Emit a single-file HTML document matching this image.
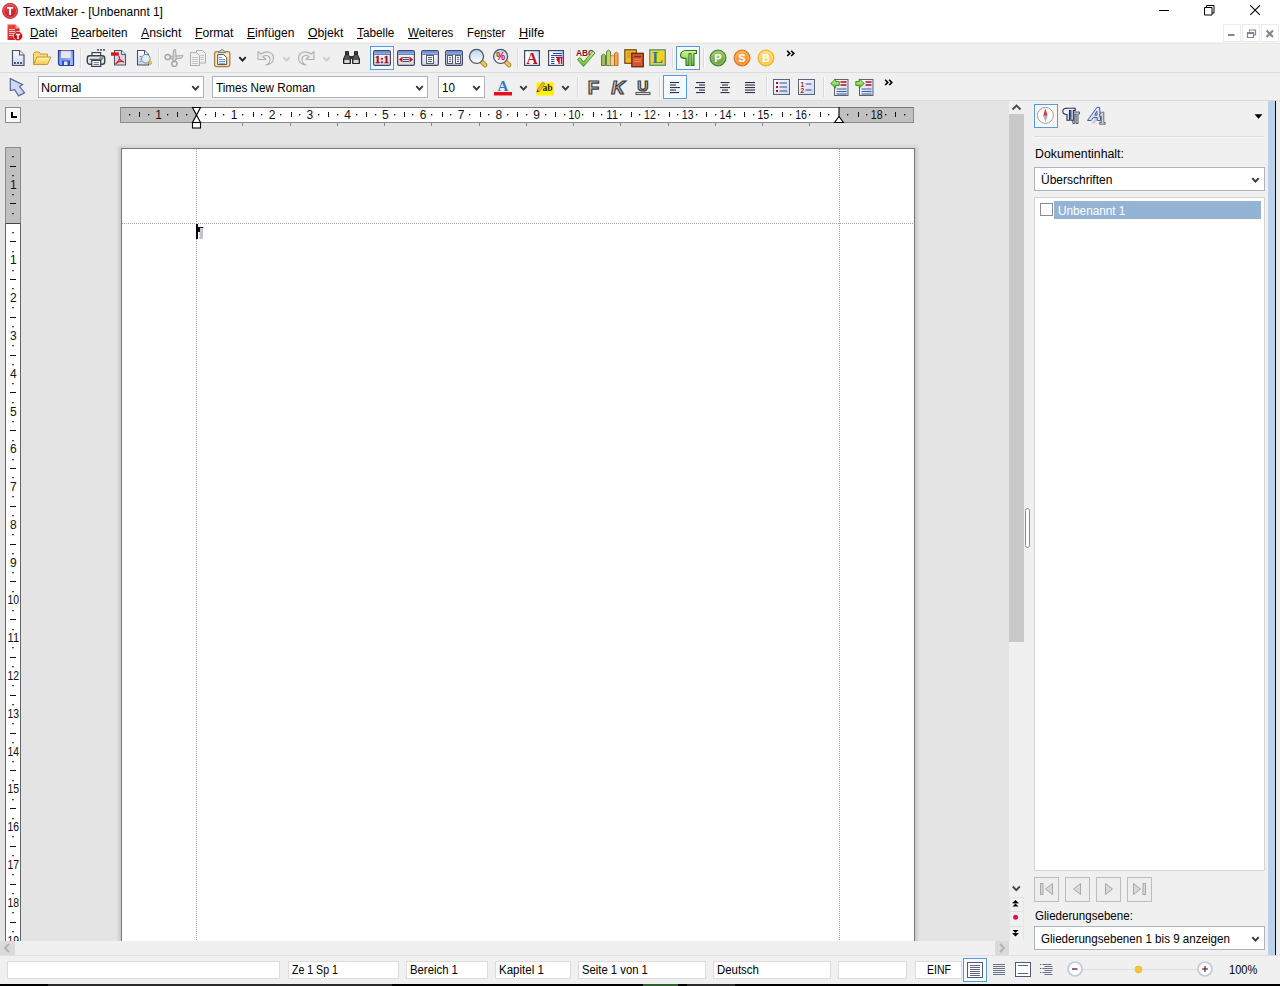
<!DOCTYPE html>
<html lang="de"><head><meta charset="utf-8"><title>TextMaker - [Unbenannt 1]</title>
<style>
html,body{margin:0;padding:0;}
body{width:1280px;height:986px;overflow:hidden;background:#f0f0f0;position:relative;font-family:"Liberation Sans",sans-serif;}
#root{position:absolute;left:0;top:0;width:1280px;height:986px;overflow:hidden;}
#root div,#root span,#root svg{position:absolute;box-sizing:border-box;}
.t{white-space:nowrap;line-height:1;}
u{text-decoration:underline;text-underline-offset:1px;}
</style></head>
<body><div id="root">
<div style="left:0px;top:0px;width:1280px;height:43px;background:#fff;"></div>
<div style="left:0px;top:41px;width:1280px;height:3px;background:linear-gradient(#fff,#f4f4f4 50%,#e2e2e2);"></div>
<svg style="left:2px;top:3px;" width="17" height="17" viewBox="0 0 17 17"><defs><radialGradient id="tg" cx="40%" cy="30%" r="75%"><stop offset="0" stop-color="#e84048"/><stop offset="1" stop-color="#c01820"/></radialGradient></defs>
<circle cx="8.1" cy="7.9" r="7.6" fill="url(#tg)" stroke="#c42830" stroke-width="0.8"/>
<circle cx="8.1" cy="7.9" r="6.4" fill="none" stroke="#f8a0a0" stroke-width="0.7" opacity=".8"/>
<path d="M5 4h6.100v1.700h-2.100v6.200h-2v-6.200h-2z" fill="#fff"/></svg>
<span class="t" id="t1" style="left:23px;top:6px;font-size:12px;color:#000;transform:scaleX(0.9893);transform-origin:0 0;">TextMaker - [Unbenannt 1]</span>
<svg style="left:1150px;top:0px;" width="130" height="22" viewBox="0 0 130 22"><g fill="none" stroke="#000" stroke-width="1">
<path d="M9 10.5h10"/>
<path d="M54.5 7.5h7.5v7.5h-7.5z"/><path d="M56.5 7.5v-2h7.5v7.5h-2"/>
<path d="M100.3 5.3l9.6 9.6M109.9 5.3l-9.6 9.6" stroke-width="1.1"/></g></svg>
<svg style="left:6px;top:23px;" width="18" height="19" viewBox="0 0 18 19"><defs><linearGradient id="mg" x1="0" y1="0" x2="1" y2="1"><stop offset="0" stop-color="#f0524c"/><stop offset="1" stop-color="#c0141c"/></linearGradient></defs>
<path d="M1.500 1.500h8l4 4v11.500h-12z" fill="url(#mg)"/>
<path d="M9.500 1.500v4h4z" fill="#f7a9a4"/>
<path d="M3 6.500h6M3 8.500h6M3 10.500h5M3 12.500h4" stroke="#f9c7c3" stroke-width="1"/>
<circle cx="12" cy="13" r="4.600" fill="#c4151d" stroke="#fbd2cf" stroke-width="0.8"/>
<path d="M9.800 10.800h4.400v1.400h-1.400v3.800h-1.600v-3.800H9.800z" fill="#fff"/></svg>
<span class="t" id="t2" style="left:29.5px;top:27px;font-size:12px;color:#000;transform:scaleX(0.9775);transform-origin:0 0;"><u>D</u>atei</span>
<span class="t" id="t3" style="left:70.5px;top:27px;font-size:12px;color:#000;transform:scaleX(0.9714);transform-origin:0 0;"><u>B</u>earbeiten</span>
<span class="t" id="t4" style="left:140.5px;top:27px;font-size:12px;color:#000;transform:scaleX(1.0260);transform-origin:0 0;"><u>A</u>nsicht</span>
<span class="t" id="t5" style="left:194.5px;top:27px;font-size:12px;color:#000;transform:scaleX(1.0097);transform-origin:0 0;"><u>F</u>ormat</span>
<span class="t" id="t6" style="left:246.5px;top:27px;font-size:12px;color:#000;transform:scaleX(1.0002);transform-origin:0 0;"><u>E</u>infügen</span>
<span class="t" id="t7" style="left:307.5px;top:27px;font-size:12px;color:#000;transform:scaleX(1.0201);transform-origin:0 0;"><u>O</u>bjekt</span>
<span class="t" id="t8" style="left:356.5px;top:27px;font-size:12px;color:#000;transform:scaleX(0.9834);transform-origin:0 0;"><u>T</u>abelle</span>
<span class="t" id="t9" style="left:407.5px;top:27px;font-size:12px;color:#000;transform:scaleX(0.9631);transform-origin:0 0;"><u>W</u>eiteres</span>
<span class="t" id="t10" style="left:466.5px;top:27px;font-size:12px;color:#000;transform:scaleX(0.9431);transform-origin:0 0;">Fe<u>n</u>ster</span>
<span class="t" id="t11" style="left:518.5px;top:27px;font-size:12px;color:#000;transform:scaleX(1.0576);transform-origin:0 0;"><u>H</u>ilfe</span>
<div style="left:1223px;top:24px;width:18px;height:18px;border:1px solid #ececec;background:#fff;"></div>
<div style="left:1242px;top:24px;width:18px;height:18px;border:1px solid #ececec;background:#fff;"></div>
<div style="left:1261px;top:24px;width:18px;height:18px;border:1px solid #ececec;background:#fff;"></div>
<svg style="left:1223px;top:24px;" width="56" height="18" viewBox="0 0 56 18"><g fill="none" stroke="#7d858f">
<path d="M5 11h6.500" stroke-width="2"/>
<path d="M24.500 8.500h6v5h-6z" stroke-width="1.2"/><path d="M24.500 9h6" stroke-width="2"/><path d="M26.500 7.500v-1.500h6v5h-2" stroke-width="1.200"/>
<path d="M43.500 6.500l6.500 6.500M50 6.500l-6.500 6.500" stroke-width="2"/></g></svg>
<div style="left:0px;top:44px;width:1280px;height:57px;background:#f0f0f0;"></div>
<div style="left:0px;top:72px;width:1280px;height:1px;background:#dcdcdc;"></div>
<div style="left:0px;top:100px;width:1280px;height:1px;background:#dadada;"></div>
<svg width="0" height="0" style="left:0;top:0"><defs>
<linearGradient id="gdoc" x1="0" y1="0" x2="0" y2="1"><stop offset="0" stop-color="#ffffff"/><stop offset="1" stop-color="#c9d3ec"/></linearGradient>
<linearGradient id="gfold" x1="0" y1="0" x2="0" y2="1"><stop offset="0" stop-color="#fff3b8"/><stop offset="1" stop-color="#f2c84a"/></linearGradient>
<linearGradient id="gsave" x1="0" y1="0" x2="1" y2="1"><stop offset="0" stop-color="#5c86ea"/><stop offset="1" stop-color="#a8c4ff"/></linearGradient>
<linearGradient id="gwin" x1="0" y1="0" x2="0" y2="1"><stop offset="0" stop-color="#ffffff"/><stop offset="1" stop-color="#d5d9e4"/></linearGradient>
<linearGradient id="gtitle" x1="0" y1="0" x2="0" y2="1"><stop offset="0" stop-color="#4f78d8"/><stop offset="1" stop-color="#9cb4ec"/></linearGradient>
<radialGradient id="glens" cx="40%" cy="35%" r="70%"><stop offset="0" stop-color="#ffffff"/><stop offset="1" stop-color="#cfe0f2"/></radialGradient>
<radialGradient id="gP" cx="50%" cy="35%" r="70%"><stop offset="0" stop-color="#a6d06a"/><stop offset="1" stop-color="#4c8a2a"/></radialGradient>
<radialGradient id="gS" cx="50%" cy="35%" r="70%"><stop offset="0" stop-color="#ffb648"/><stop offset="1" stop-color="#e8721a"/></radialGradient>
<radialGradient id="gB" cx="50%" cy="35%" r="70%"><stop offset="0" stop-color="#ffe58a"/><stop offset="1" stop-color="#f5b81c"/></radialGradient>
<linearGradient id="ggreen" x1="0" y1="0" x2="0" y2="1"><stop offset="0" stop-color="#d6f6a0"/><stop offset="1" stop-color="#62b82c"/></linearGradient>
<linearGradient id="glens2" x1="0" y1="0" x2="0" y2="1"><stop offset="0" stop-color="#bcd4ec"/><stop offset="1" stop-color="#ffffff"/></linearGradient>
<linearGradient id="gfku" x1="0" y1="0" x2="1" y2="1"><stop offset="0" stop-color="#fafafa"/><stop offset="1" stop-color="#8e8e8e"/></linearGradient>
<linearGradient id="glistr" x1="0" y1="1" x2="1" y2="0"><stop offset="0.500" stop-color="#ffffff"/><stop offset="1" stop-color="#c4d4f0"/></linearGradient>
<linearGradient id="glist" x1="0" y1="0" x2="1" y2="1"><stop offset="0" stop-color="#ffffff"/><stop offset="1" stop-color="#c6d4f0"/></linearGradient>
</defs></svg>
<svg style="left:11px;top:49px;" width="15" height="18" viewBox="0 0 15 18"><path d="M1.500 1.500h7l4.500 4.500v10.500h-11.500z" fill="url(#gdoc)" stroke="#4a5068" stroke-width="1.200"/><path d="M8.500 1.500v4.500h4.500" fill="#f4f6fc" stroke="#4a5068" stroke-width="1.100"/>
<rect x="3" y="13" width="2" height="2" fill="#4a5a80"/><rect x="6" y="13" width="2" height="2" fill="#4a5a80"/><rect x="9" y="13" width="2" height="2" fill="#4a5a80"/></svg>
<svg style="left:32px;top:50px;" width="20" height="17" viewBox="0 0 20 17"><path d="M1.500 14.500v-11l1.500-1.500h4l1.500 2h7v3" fill="#f7dc7a" stroke="#c79a2a" stroke-width="1"/>
<path d="M1.500 14.500l3.500-7.500h14l-3.500 7.500z" fill="url(#gfold)" stroke="#c79a2a" stroke-width="1"/></svg>
<svg style="left:57px;top:49px;" width="18" height="18" viewBox="0 0 18 18"><path d="M1.500 1.500h15v15h-13.500l-1.500-1.500z" fill="url(#gsave)" stroke="#2c3c94" stroke-width="1.200"/>
<rect x="4" y="2" width="10" height="7" fill="#e8e8e8"/><path d="M4 2h10v7" fill="none" stroke="#b8b8c0" stroke-width="0.8"/>
<rect x="5" y="11.500" width="8" height="5" fill="#3450b4"/><rect x="7" y="12.500" width="3.500" height="3.500" fill="#e8e8e8"/></svg>
<div style="left:80px;top:48px;width:1px;height:20px;background:#dadada;"></div>
<div style="left:81px;top:48px;width:1px;height:20px;background:#fafafa;"></div>
<svg style="left:86px;top:48px;" width="21" height="20" viewBox="0 0 21 20"><rect x="11" y="1.200" width="2" height="1.400" fill="#3a3e48"/><rect x="14" y="1.200" width="2" height="1.400" fill="#3a3e48"/><rect x="17" y="1.200" width="2" height="1.400" fill="#3a3e48"/>
<rect x="6" y="4.600" width="8.600" height="4" fill="#fff" stroke="#3a4048" stroke-width="1.200"/>
<rect x="1.300" y="7.700" width="17.400" height="8.600" rx="2.600" fill="#e6e9ec" stroke="#3a4048" stroke-width="1.400"/>
<path d="M13.500 10h4" stroke="#4c9a48" stroke-width="1.400"/><path d="M3.500 11.300h13" stroke="#4a5058" stroke-width="1"/>
<rect x="5.700" y="12.400" width="9" height="6" fill="#fff" stroke="#3a4048" stroke-width="1.200"/>
<path d="M7.500 14.700h5.500M7.500 16.500h5.500" stroke="#4a66b0" stroke-width="0.900"/></svg>
<svg style="left:110px;top:49px;" width="17" height="18" viewBox="0 0 17 18"><path d="M4.500 1.500h7l4 4v10.500h-11z" fill="#d6dae6" stroke="#505868" stroke-width="1.100"/><path d="M11.500 1.500v4h4" fill="#e4f2f8" stroke="#505868" stroke-width="1"/>
<rect x="1" y="3.400" width="7.800" height="3.300" fill="#e01020"/>
<path d="M9 7c1.300 2.800-1.200 6.200-3.500 8 2-2 5.500-3 8.500-2.200-3-0.600-5-3-5-5.800z" fill="none" stroke="#d8202c" stroke-width="1.300"/></svg>
<svg style="left:136px;top:49px;" width="18" height="18" viewBox="0 0 18 18"><path d="M1.500 1.500h7l4 4v10.500h-11z" fill="url(#gdoc)" stroke="#4a5068" stroke-width="1.100"/><path d="M8.500 1.500v4h4" fill="#f4f6fc" stroke="#4a5068" stroke-width="1"/>
<path d="M3.500 7.500h2M4 10h1.500M3.500 12.500h2" stroke="#7c88a8" stroke-width="1"/>
<circle cx="9.900" cy="9.700" r="4.300" fill="#dceef8" stroke="#7e8aa0" stroke-width="1"/><circle cx="14" cy="13.700" r="1.800" fill="#eab846" stroke="#c89a30" stroke-width="0.500"/></svg>
<div style="left:158px;top:48px;width:1px;height:20px;background:#dadada;"></div>
<div style="left:159px;top:48px;width:1px;height:20px;background:#fafafa;"></div>
<svg style="left:164px;top:49px;" width="20" height="18" viewBox="0 0 20 18"><g fill="#dcdcdc" stroke="#a6a6a6" stroke-width="1"><path d="M6.300 7.300l12.700-0.700-1 2.300-8 1.600-3.700-0.800z"/><path d="M9 12.300l0.400-11.300 2.100-0.500 0.700 8.500-1 3.300z"/></g>
<g fill="#f0f0f0" stroke="#a6a6a6" stroke-width="1.500"><circle cx="3.700" cy="8" r="2.600"/><circle cx="10.400" cy="14.800" r="2.600"/></g></svg>
<svg style="left:189px;top:49px;" width="18" height="18" viewBox="0 0 18 18"><g fill="#f0f0f0" stroke="#adadad" stroke-width="1"><path d="M7.500 1.500h6l3 3v9.500h-9z"/><path d="M1.500 3.500h6l3 3v10h-9z"/></g>
<path d="M3 8.500h6M3 10.500h6M3 12.500h6M3 14.500h6M11.500 6.500h3.500M11.500 8.500h3.500M11.500 10.500h3.500" stroke="#c4c4c4" stroke-width="1"/></svg>
<svg style="left:213px;top:48px;" width="18" height="20" viewBox="0 0 18 20"><rect x="1.600" y="3.600" width="15.200" height="15" rx="1.800" fill="#fce6bc" stroke="#a87c44" stroke-width="1.300"/>
<path d="M5.500 4.600c0-1.500 1.500-1.600 2-1.800 0.300-1.600 3-1.600 3.300 0 0.500 0.200 2 0.300 2 1.800z" fill="#c8ccd0" stroke="#70747c" stroke-width="0.900"/>
<path d="M4.700 6.600h6l3 3v7h-9z" fill="#fff" stroke="#4c4c50" stroke-width="1"/>
<path d="M6 9.500h3M6 11.500h6M6 13.500h6M6 15.300h6" stroke="#5a8ad0" stroke-width="0.900"/></svg>
<svg style="left:238px;top:56px;" width="9" height="7" viewBox="0 0 9 7"><path d="M1.300 1.100l3.200 3.500 3.200-3.500" fill="none" stroke="#222" stroke-width="2"/></svg>
<svg style="left:256px;top:49px;" width="20" height="18" viewBox="0 0 20 18"><path d="M2 2.500v8h8l-3-3c3-2 7-1 7 3 0 2.500-1.500 4.500-4 5.500 5-0.500 7.500-3.500 7.500-7 0-6-7-8-12.500-4z" fill="#ececec" stroke="#b0b0b0" stroke-width="1.100" stroke-linejoin="round"/></svg>
<svg style="left:282px;top:56px;" width="9" height="7" viewBox="0 0 9 7"><path d="M1.300 1.100l3.200 3.500 3.200-3.500" fill="none" stroke="#cecece" stroke-width="2"/></svg>
<svg style="left:296px;top:49px;" width="20" height="18" viewBox="0 0 20 18"><path d="M18 2.500v8h-8l3-3c-3-2-7-1-7 3 0 2.500 1.500 4.500 4 5.500-5-0.500-7.500-3.500-7.500-7 0-6 7-8 12.500-4z" fill="#ececec" stroke="#b0b0b0" stroke-width="1.100" stroke-linejoin="round"/></svg>
<svg style="left:322px;top:56px;" width="9" height="7" viewBox="0 0 9 7"><path d="M1.300 1.100l3.200 3.500 3.200-3.500" fill="none" stroke="#cecece" stroke-width="2"/></svg>
<svg style="left:342px;top:50px;" width="20" height="16" viewBox="0 0 20 16"><g fill="#555" stroke="#222" stroke-width="1"><path d="M3.500 1.500h3v3h-3zM12.500 1.500h3v3h-3z" fill="#444"/>
<path d="M1.500 13.500v-4.500l2-4.500h3l2 4.500v4.500zM10.500 13.500v-4.500l2-4.500h3l2 4.500v4.500z"/></g>
<path d="M2.500 10h5v3h-5zM11.500 10h5v3h-5z" fill="#d8d8d8"/><rect x="8" y="6" width="3" height="3" fill="#333"/></svg>
<div style="left:370px;top:46px;width:24px;height:24px;border:1px solid #5a9ad8;background:#f4f9fe;"></div>
<svg style="left:373px;top:50px;" width="20" height="17" viewBox="0 0 20 17"><rect x="0.600" y="0.600" width="16.800" height="14.800" rx="1.500" fill="url(#gwin)" stroke="#3e4766" stroke-width="1.200"/><rect x="1.200" y="1.200" width="15.600" height="2.800" fill="url(#gtitle)"/><path d="M1 4.500h16" stroke="#5a6488" stroke-width="0.800"/><text x="9" y="13" font-family="Liberation Serif,serif" font-weight="bold" font-size="11" fill="#a80808" stroke="#a80808" stroke-width="0.400" text-anchor="middle" textLength="14" lengthAdjust="spacingAndGlyphs">1:1</text></svg>
<svg style="left:397px;top:50px;" width="20" height="17" viewBox="0 0 20 17"><rect x="0.600" y="0.600" width="16.800" height="14.800" rx="1.500" fill="url(#gwin)" stroke="#3e4766" stroke-width="1.200"/><rect x="1.200" y="1.200" width="15.600" height="2.800" fill="url(#gtitle)"/><path d="M1 4.500h16" stroke="#5a6488" stroke-width="0.800"/><path d="M2 9.500l3.500-3v6zM16 9.500l-3.500-3v6z" fill="#d01010"/><path d="M6 7.500h6M6 9.500h6M6 11.500h6" stroke="#454d66" stroke-width="1"/></svg>
<svg style="left:421px;top:50px;" width="20" height="17" viewBox="0 0 20 17"><rect x="0.600" y="0.600" width="16.800" height="14.800" rx="1.500" fill="url(#gwin)" stroke="#3e4766" stroke-width="1.200"/><rect x="1.200" y="1.200" width="15.600" height="2.800" fill="url(#gtitle)"/><path d="M1 4.500h16" stroke="#5a6488" stroke-width="0.800"/><rect x="5.500" y="5.500" width="7" height="8" fill="#f4f4f4" stroke="#555d78" stroke-width="1"/><path d="M7 7.500h4M7 9.500h4M7 11.500h4" stroke="#555d78" stroke-width="1"/></svg>
<svg style="left:445px;top:50px;" width="20" height="17" viewBox="0 0 20 17"><rect x="0.600" y="0.600" width="16.800" height="14.800" rx="1.500" fill="url(#gwin)" stroke="#3e4766" stroke-width="1.200"/><rect x="1.200" y="1.200" width="15.600" height="2.800" fill="url(#gtitle)"/><path d="M1 4.500h16" stroke="#5a6488" stroke-width="0.800"/><rect x="2.500" y="5.500" width="5" height="8" fill="#f4f4f4" stroke="#555d78" stroke-width="1"/><rect x="10.500" y="5.500" width="5" height="8" fill="#f4f4f4" stroke="#555d78" stroke-width="1"/><path d="M4 7.500h2M4 9.500h2M4 11.500h2M12 7.500h2M12 9.500h2M12 11.500h2" stroke="#555d78" stroke-width="1"/></svg>
<svg style="left:468px;top:48px;" width="21" height="20" viewBox="0 0 21 20"><path d="M14 14l3 3" stroke="#b88a28" stroke-width="4.600" stroke-linecap="round"/><path d="M14 14l3 3" stroke="#ecc860" stroke-width="2.600" stroke-linecap="round"/>
<circle cx="8.500" cy="8.400" r="7" fill="url(#glens2)" stroke="#4c565e" stroke-width="1.300"/></svg>
<svg style="left:492px;top:48px;" width="21" height="20" viewBox="0 0 21 20"><path d="M14 14l3 3" stroke="#b88a28" stroke-width="4.600" stroke-linecap="round"/><path d="M14 14l3 3" stroke="#ecc860" stroke-width="2.600" stroke-linecap="round"/>
<circle cx="8.600" cy="8.400" r="7" fill="url(#glens2)" stroke="#4c565e" stroke-width="1.300"/>
<text x="8.600" y="12" font-family="Liberation Sans,sans-serif" font-weight="bold" font-size="10" fill="#d00c1c" text-anchor="middle">%</text></svg>
<div style="left:517px;top:48px;width:1px;height:20px;background:#dadada;"></div>
<div style="left:518px;top:48px;width:1px;height:20px;background:#fafafa;"></div>
<svg style="left:524px;top:50px;" width="17" height="17" viewBox="0 0 17 17"><rect x="0.600" y="0.600" width="14.800" height="14.800" fill="url(#glistr)" stroke="#3c4868" stroke-width="1.200"/>
<text x="8" y="13.600" font-family="Liberation Serif,serif" font-weight="bold" font-size="16" fill="#c01028" text-anchor="middle">A</text></svg>
<svg style="left:548px;top:50px;" width="17" height="17" viewBox="0 0 17 17"><rect x="0.600" y="0.600" width="14.800" height="14.800" fill="url(#glistr)" stroke="#3c4868" stroke-width="1.200"/>
<path d="M5 3.500h9M3 5.500h11M3 7.500h3.500M3 9.500h3.500M3 11.500h3.500M3 13.500h3.500" stroke="#2c4aa0" stroke-width="1"/>
<path d="M8 7.500h6.500M11 7.500v6.500M13.500 7.500v6.500" stroke="#c01028" stroke-width="1.400" fill="none"/><path d="M10.800 7.800a1.800 1.800 0 0 0 0 3.600z" fill="#c01028" stroke="#c01028" stroke-width="1"/></svg>
<div style="left:570px;top:48px;width:1px;height:20px;background:#dadada;"></div>
<div style="left:571px;top:48px;width:1px;height:20px;background:#fafafa;"></div>
<svg style="left:575px;top:47px;" width="22" height="21" viewBox="0 0 22 21"><text x="10" y="8.500" font-family="Liberation Sans,sans-serif" font-weight="bold" font-size="8.500" fill="#8a1418" text-anchor="middle" textLength="18" lengthAdjust="spacingAndGlyphs">ABC</text>
<path d="M2.500 12.500l2.500-2 3.500 4.500 9.500-11 2 2-11.500 13.500z" fill="url(#ggreen)" stroke="#3a8a1c" stroke-width="0.900"/></svg>
<svg style="left:600px;top:49px;" width="20" height="18" viewBox="0 0 20 18"><g stroke="#5a7a24" stroke-width="0.900"><path d="M1.500 16.500v-10l2-1.500 2 1.500v10z" fill="#9cc060"/><path d="M6.500 16.500v-14l2-1.500 2 1.500v14z" fill="#b8d878"/><path d="M10.500 16.500v-9l2-1.500 2 1.500v9z" fill="#f0d090" stroke="#b08a3a"/><path d="M14.500 16.500v-12l2-1.500 1.500 1.500v12z" fill="#f0a850" stroke="#b0702a"/></g></svg>
<svg style="left:624px;top:49px;" width="21" height="19" viewBox="0 0 21 19"><rect x="0.800" y="0.800" width="11.500" height="13.500" fill="#f0b828" stroke="#6a4a10" stroke-width="1.200"/><path d="M3 4h7M3 6h7M3 8h7" stroke="#c88a18" stroke-width="1"/>
<rect x="7.800" y="4.300" width="11.500" height="13.500" fill="#d8582c" stroke="#5a2410" stroke-width="1.200"/><path d="M10 7.500h7" stroke="#8a2c14" stroke-width="1.500"/><path d="M10 10.500h7M10 12.500h7" stroke="#f09070" stroke-width="0.800"/></svg>
<svg style="left:649px;top:49px;" width="18" height="18" viewBox="0 0 18 18"><rect x="0.800" y="0.800" width="15.500" height="15.500" fill="#f6d024" stroke="#4a9a88" stroke-width="1.300"/>
<text x="8.500" y="14" font-family="Liberation Serif,serif" font-weight="bold" font-size="16" fill="#1a7ab8" text-anchor="middle">L</text></svg>
<div style="left:672px;top:48px;width:1px;height:20px;background:#dadada;"></div>
<div style="left:673px;top:48px;width:1px;height:20px;background:#fafafa;"></div>
<div style="left:676px;top:46px;width:24px;height:24px;border:1px solid #5a9ad8;background:#f4f9fe;"></div>
<svg style="left:679px;top:49px;" width="19" height="18" viewBox="0 0 19 18"><path d="M1.500 6.500c0-3 2-5 5.500-5h10.500v3h-2.500v12h-3v-12h-2v12h-3v-7c-3.500 0-5.500-0.500-5.500-3z" fill="url(#ggreen)" stroke="#2c7a14" stroke-width="1.100" stroke-linejoin="round"/></svg>
<div style="left:703px;top:48px;width:1px;height:20px;background:#dadada;"></div>
<div style="left:704px;top:48px;width:1px;height:20px;background:#fafafa;"></div>
<svg style="left:709px;top:49px;" width="18" height="18" viewBox="0 0 18 18"><circle cx="9" cy="9" r="8" fill="url(#gP)" stroke="#4a8428" stroke-width="1"/><circle cx="9" cy="9" r="6.300" fill="none" stroke="#fff" stroke-width="0.700" opacity=".55"/>
<text x="9" y="13" font-family="Liberation Sans,sans-serif" font-weight="bold" font-size="11" fill="#fff" text-anchor="middle">P</text></svg>
<svg style="left:733px;top:49px;" width="18" height="18" viewBox="0 0 18 18"><circle cx="9" cy="9" r="8" fill="url(#gS)" stroke="#e07818" stroke-width="1"/><circle cx="9" cy="9" r="6.300" fill="none" stroke="#fff" stroke-width="0.700" opacity=".55"/>
<text x="9" y="13" font-family="Liberation Sans,sans-serif" font-weight="bold" font-size="11" fill="#fff" text-anchor="middle">S</text></svg>
<svg style="left:757px;top:49px;" width="18" height="18" viewBox="0 0 18 18"><circle cx="9" cy="9" r="8" fill="url(#gB)" stroke="#f0b020" stroke-width="1"/><circle cx="9" cy="9" r="6.300" fill="none" stroke="#fff" stroke-width="0.700" opacity=".55"/>
<text x="9" y="13" font-family="Liberation Sans,sans-serif" font-weight="bold" font-size="11" fill="#fff" text-anchor="middle">B</text></svg>
<svg style="left:786px;top:50px;" width="10" height="7" viewBox="0 0 10 7"><path d="M1.200 0.800l2.600 2.600-2.600 2.600M5.200 0.800l2.600 2.600-2.600 2.600" fill="none" stroke="#000" stroke-width="1.600"/></svg>
<svg style="left:8px;top:76px;" width="18" height="22" viewBox="0 0 18 22"><path d="M2.300 2.600l12.300 6-3 2 5 6.300-6 3-4-6.300-4.300 1z" fill="#ccd8f6" stroke="#5a6c9c" stroke-width="1.200" stroke-linejoin="miter"/></svg>
<div style="left:38px;top:76px;width:166px;height:22px;background:#fff;border:1px solid #abb3c4;"></div>
<svg style="left:191px;top:85px;" width="9" height="7" viewBox="0 0 9 7"><path d="M1.300 1.100l3.200 3.500 3.200-3.500" fill="none" stroke="#3a3a3a" stroke-width="2"/></svg>
<span class="t" id="t12" style="left:41px;top:82px;font-size:12px;color:#000;transform:scaleX(1.0447);transform-origin:0 0;">Normal</span>
<div style="left:212px;top:76px;width:216px;height:22px;background:#fff;border:1px solid #abb3c4;"></div>
<svg style="left:415px;top:85px;" width="9" height="7" viewBox="0 0 9 7"><path d="M1.300 1.100l3.200 3.500 3.200-3.500" fill="none" stroke="#3a3a3a" stroke-width="2"/></svg>
<span class="t" id="t13" style="left:216px;top:82px;font-size:12px;color:#000;transform:scaleX(0.9736);transform-origin:0 0;">Times New Roman</span>
<div style="left:438px;top:76px;width:47px;height:22px;background:#fff;border:1px solid #abb3c4;"></div>
<svg style="left:472px;top:85px;" width="9" height="7" viewBox="0 0 9 7"><path d="M1.300 1.100l3.200 3.500 3.200-3.500" fill="none" stroke="#3a3a3a" stroke-width="2"/></svg>
<span class="t" id="t14" style="left:442px;top:82px;font-size:12px;color:#000;transform:scaleX(0.9656);transform-origin:0 0;">10</span>
<svg style="left:493px;top:78px;" width="20" height="19" viewBox="0 0 20 19"><text x="10" y="12.500" font-family="Liberation Serif,serif" font-weight="bold" font-size="15" fill="#3a78b8" text-anchor="middle">A</text><rect x="1" y="14" width="18" height="3.500" fill="#e81018"/></svg>
<svg style="left:519px;top:85px;" width="9" height="7" viewBox="0 0 9 7"><path d="M1.300 1.100l3.200 3.500 3.200-3.500" fill="none" stroke="#3a3a3a" stroke-width="2"/></svg>
<svg style="left:535px;top:78px;" width="20" height="19" viewBox="0 0 20 19"><rect x="1.500" y="4.500" width="17.500" height="13" fill="#fff200"/>
<text x="12.500" y="13" font-family="Liberation Serif,serif" font-weight="bold" font-size="9.500" fill="#222" text-anchor="middle">ab</text>
<path d="M2 12l5.500-8 2.500 1.500-5.500 8z" fill="#e8b050" stroke="#a87820" stroke-width="0.600"/><path d="M2 12l2.500 1.500-3 1z" fill="#444"/></svg>
<svg style="left:561px;top:85px;" width="9" height="7" viewBox="0 0 9 7"><path d="M1.300 1.100l3.200 3.500 3.200-3.500" fill="none" stroke="#3a3a3a" stroke-width="2"/></svg>
<div style="left:577px;top:77px;width:1px;height:20px;background:#dadada;"></div>
<div style="left:578px;top:77px;width:1px;height:20px;background:#fafafa;"></div>
<svg style="left:585px;top:78px;" width="16" height="18" viewBox="0 0 16 18"><text x="8.400" y="15.500" font-family="Liberation Sans,sans-serif" font-weight="bold" font-size="18.800" fill="url(#gfku)" stroke="#3c3c3c" stroke-width="1.200" text-anchor="middle">F</text></svg>
<svg style="left:608px;top:78px;" width="21" height="18" viewBox="0 0 21 18"><text x="10" y="15.500" font-family="Liberation Sans,sans-serif" font-weight="bold" font-style="italic" font-size="18.800" fill="url(#gfku)" stroke="#3c3c3c" stroke-width="1.200" text-anchor="middle">K</text></svg>
<svg style="left:634px;top:78px;" width="18" height="19" viewBox="0 0 18 19"><text x="8.900" y="13.200" font-family="Liberation Sans,sans-serif" font-weight="bold" font-size="15.500" fill="url(#gfku)" stroke="#3c3c3c" stroke-width="1.200" text-anchor="middle">U</text><rect x="2" y="14.400" width="14" height="2.200" fill="#d8d8d8" stroke="#464646" stroke-width="0.900"/></svg>
<div style="left:659px;top:77px;width:1px;height:20px;background:#dadada;"></div>
<div style="left:660px;top:77px;width:1px;height:20px;background:#fafafa;"></div>
<div style="left:663px;top:75px;width:24px;height:24px;border:1px solid #5a9ad8;background:#f4f9fe;"></div>
<svg style="left:670px;top:82px;" width="12" height="12" viewBox="0 0 12 12"><rect x="0" y="0.0" width="9" height="1.100" fill="#2a2f4a"/><rect x="0" y="2.5" width="6" height="1.100" fill="#2a2f4a"/><rect x="0" y="5.0" width="10" height="1.100" fill="#2a2f4a"/><rect x="0" y="7.5" width="6" height="1.100" fill="#2a2f4a"/><rect x="0" y="10.0" width="9" height="1.100" fill="#2a2f4a"/></svg>
<svg style="left:695px;top:82px;" width="12" height="12" viewBox="0 0 12 12"><rect x="1" y="0.0" width="9" height="1.100" fill="#2a2f4a"/><rect x="4" y="2.5" width="6" height="1.100" fill="#2a2f4a"/><rect x="0" y="5.0" width="10" height="1.100" fill="#2a2f4a"/><rect x="4" y="7.5" width="6" height="1.100" fill="#2a2f4a"/><rect x="1" y="10.0" width="9" height="1.100" fill="#2a2f4a"/></svg>
<svg style="left:720px;top:82px;" width="12" height="12" viewBox="0 0 12 12"><rect x="0.5" y="0.0" width="9" height="1.100" fill="#2a2f4a"/><rect x="2" y="2.5" width="6" height="1.100" fill="#2a2f4a"/><rect x="0" y="5.0" width="10" height="1.100" fill="#2a2f4a"/><rect x="2" y="7.5" width="6" height="1.100" fill="#2a2f4a"/><rect x="0.5" y="10.0" width="9" height="1.100" fill="#2a2f4a"/></svg>
<svg style="left:745px;top:82px;" width="12" height="12" viewBox="0 0 12 12"><rect x="0" y="0.0" width="10" height="1.100" fill="#2a2f4a"/><rect x="0" y="2.5" width="10" height="1.100" fill="#2a2f4a"/><rect x="0" y="5.0" width="10" height="1.100" fill="#2a2f4a"/><rect x="0" y="7.5" width="10" height="1.100" fill="#2a2f4a"/><rect x="0" y="10.0" width="10" height="1.100" fill="#2a2f4a"/></svg>
<div style="left:766px;top:77px;width:1px;height:20px;background:#dadada;"></div>
<div style="left:767px;top:77px;width:1px;height:20px;background:#fafafa;"></div>
<svg style="left:773px;top:79px;" width="18" height="17" viewBox="0 0 18 17"><rect x="0.500" y="0.500" width="16" height="15" fill="url(#glist)" stroke="#5a6478" stroke-width="1"/>
<rect x="3" y="3" width="2" height="2" fill="#b01018"/><rect x="3" y="7" width="2" height="2" fill="#b01018"/><rect x="3" y="11" width="2" height="2" fill="#b01018"/>
<path d="M6.500 4h7.500M6.500 8h7.500M6.500 12h7.500" stroke="#3c4c88" stroke-width="1"/></svg>
<svg style="left:798px;top:79px;" width="18" height="17" viewBox="0 0 18 17"><rect x="0.500" y="0.500" width="16" height="15" fill="url(#glist)" stroke="#5a6478" stroke-width="1"/>
<text x="2.500" y="7.500" font-family="Liberation Sans,sans-serif" font-weight="bold" font-size="6.500" fill="#b01018">1</text><text x="2.500" y="13.500" font-family="Liberation Sans,sans-serif" font-weight="bold" font-size="6.500" fill="#b01018">2</text>
<path d="M7.500 5h6M7.500 11h6" stroke="#3c4c88" stroke-width="1"/></svg>
<div style="left:823px;top:77px;width:1px;height:20px;background:#dadada;"></div>
<div style="left:824px;top:77px;width:1px;height:20px;background:#fafafa;"></div>
<svg style="left:830px;top:78px;" width="19" height="19" viewBox="0 0 19 19"><rect x="4.500" y="1.500" width="13.500" height="16" fill="url(#glist)" stroke="#5a6478" stroke-width="1"/>
<path d="M10.500 4h6M10.500 7h6" stroke="#b01018" stroke-width="1.600"/><path d="M6.500 11h10M6.500 13.500h10M6.500 16h10" stroke="#3c4c88" stroke-width="1" opacity=".9"/><path d="M0.700 5.500l5-4.500v2.500h3.500v4h-3.500v2.500z" fill="url(#ggreen)" stroke="#2c8a14" stroke-width="0.900"/></svg>
<svg style="left:855px;top:78px;" width="19" height="19" viewBox="0 0 19 19"><rect x="4.500" y="1.500" width="13.500" height="16" fill="url(#glist)" stroke="#5a6478" stroke-width="1"/>
<path d="M10.500 4h6M10.500 7h6" stroke="#b01018" stroke-width="1.600"/><path d="M6.500 11h10M6.500 13.500h10M6.500 16h10" stroke="#3c4c88" stroke-width="1" opacity=".9"/><path d="M9.300 5.500l-5-4.500v2.500h-3.500v4h3.500v2.500z" fill="url(#ggreen)" stroke="#2c8a14" stroke-width="0.900"/></svg>
<svg style="left:884px;top:79px;" width="10" height="7" viewBox="0 0 10 7"><path d="M1.200 0.800l2.600 2.600-2.600 2.600M5.200 0.800l2.600 2.600-2.600 2.600" fill="none" stroke="#000" stroke-width="1.600"/></svg>
<div style="left:0px;top:101px;width:1009px;height:840px;background:#e4e4e4;"></div>
<div style="left:5px;top:107px;width:16px;height:16px;background:#f8f8f8;border:1px solid #8c8c8c;"></div>
<div style="left:11px;top:112px;width:2px;height:6px;background:#000;"></div>
<div style="left:11px;top:116px;width:6px;height:2px;background:#000;"></div>
<div style="left:120px;top:107px;width:794px;height:16px;background:#fff;border-top:1px solid #777;border-bottom:1px solid #8a8a8a;"></div>
<div style="left:120px;top:108px;width:76px;height:14px;background:#c0c0c0;"></div>
<div style="left:839px;top:108px;width:75px;height:14px;background:#c0c0c0;"></div>
<div style="left:120px;top:107px;width:1px;height:16px;background:#8a8a8a;"></div>
<div style="left:913px;top:107px;width:1px;height:16px;background:#8a8a8a;"></div>
<svg style="left:120px;top:107px;" width="794" height="16" viewBox="0 0 794 16"><g font-family="Liberation Sans,sans-serif" font-size="12" fill="#111"><rect x="9" y="7" width="1.300" height="1.400" fill="#111"/><rect x="19" y="5" width="1" height="5" fill="#111"/><rect x="28" y="7" width="1.300" height="1.400" fill="#111"/><text x="38.6" y="12.400" text-anchor="middle">1</text><rect x="47" y="7" width="1.300" height="1.400" fill="#111"/><rect x="57" y="5" width="1" height="5" fill="#111"/><rect x="66" y="7" width="1.300" height="1.400" fill="#111"/><rect x="85" y="7" width="1.300" height="1.400" fill="#111"/><rect x="95" y="5" width="1" height="5" fill="#111"/><rect x="103" y="7" width="1.300" height="1.400" fill="#111"/><text x="114.2" y="12.400" text-anchor="middle">1</text><rect x="122" y="7" width="1.300" height="1.400" fill="#111"/><rect x="133" y="5" width="1" height="5" fill="#111"/><rect x="141" y="7" width="1.300" height="1.400" fill="#111"/><text x="152.0" y="12.400" text-anchor="middle">2</text><rect x="160" y="7" width="1.300" height="1.400" fill="#111"/><rect x="171" y="5" width="1" height="5" fill="#111"/><rect x="179" y="7" width="1.300" height="1.400" fill="#111"/><text x="189.8" y="12.400" text-anchor="middle">3</text><rect x="198" y="7" width="1.300" height="1.400" fill="#111"/><rect x="208" y="5" width="1" height="5" fill="#111"/><rect x="217" y="7" width="1.300" height="1.400" fill="#111"/><text x="227.6" y="12.400" text-anchor="middle">4</text><rect x="236" y="7" width="1.300" height="1.400" fill="#111"/><rect x="246" y="5" width="1" height="5" fill="#111"/><rect x="255" y="7" width="1.300" height="1.400" fill="#111"/><text x="265.4" y="12.400" text-anchor="middle">5</text><rect x="274" y="7" width="1.300" height="1.400" fill="#111"/><rect x="284" y="5" width="1" height="5" fill="#111"/><rect x="292" y="7" width="1.300" height="1.400" fill="#111"/><text x="303.2" y="12.400" text-anchor="middle">6</text><rect x="311" y="7" width="1.300" height="1.400" fill="#111"/><rect x="322" y="5" width="1" height="5" fill="#111"/><rect x="330" y="7" width="1.300" height="1.400" fill="#111"/><text x="341.0" y="12.400" text-anchor="middle">7</text><rect x="349" y="7" width="1.300" height="1.400" fill="#111"/><rect x="360" y="5" width="1" height="5" fill="#111"/><rect x="368" y="7" width="1.300" height="1.400" fill="#111"/><text x="378.8" y="12.400" text-anchor="middle">8</text><rect x="387" y="7" width="1.300" height="1.400" fill="#111"/><rect x="397" y="5" width="1" height="5" fill="#111"/><rect x="406" y="7" width="1.300" height="1.400" fill="#111"/><text x="416.6" y="12.400" text-anchor="middle">9</text><rect x="425" y="7" width="1.300" height="1.400" fill="#111"/><rect x="435" y="5" width="1" height="5" fill="#111"/><rect x="444" y="7" width="1.300" height="1.400" fill="#111"/><text x="454.4" y="12.400" text-anchor="middle" textLength="11.8" lengthAdjust="spacingAndGlyphs">10</text><rect x="462" y="7" width="1.300" height="1.400" fill="#111"/><rect x="473" y="5" width="1" height="5" fill="#111"/><rect x="481" y="7" width="1.300" height="1.400" fill="#111"/><text x="492.1" y="12.400" text-anchor="middle" textLength="11.8" lengthAdjust="spacingAndGlyphs">11</text><rect x="500" y="7" width="1.300" height="1.400" fill="#111"/><rect x="511" y="5" width="1" height="5" fill="#111"/><rect x="519" y="7" width="1.300" height="1.400" fill="#111"/><text x="529.9" y="12.400" text-anchor="middle" textLength="11.8" lengthAdjust="spacingAndGlyphs">12</text><rect x="538" y="7" width="1.300" height="1.400" fill="#111"/><rect x="549" y="5" width="1" height="5" fill="#111"/><rect x="557" y="7" width="1.300" height="1.400" fill="#111"/><text x="567.7" y="12.400" text-anchor="middle" textLength="11.8" lengthAdjust="spacingAndGlyphs">13</text><rect x="576" y="7" width="1.300" height="1.400" fill="#111"/><rect x="586" y="5" width="1" height="5" fill="#111"/><rect x="595" y="7" width="1.300" height="1.400" fill="#111"/><text x="605.5" y="12.400" text-anchor="middle" textLength="11.8" lengthAdjust="spacingAndGlyphs">14</text><rect x="614" y="7" width="1.300" height="1.400" fill="#111"/><rect x="624" y="5" width="1" height="5" fill="#111"/><rect x="633" y="7" width="1.300" height="1.400" fill="#111"/><text x="643.3" y="12.400" text-anchor="middle" textLength="11.8" lengthAdjust="spacingAndGlyphs">15</text><rect x="651" y="7" width="1.300" height="1.400" fill="#111"/><rect x="662" y="5" width="1" height="5" fill="#111"/><rect x="670" y="7" width="1.300" height="1.400" fill="#111"/><text x="681.1" y="12.400" text-anchor="middle" textLength="11.8" lengthAdjust="spacingAndGlyphs">16</text><rect x="689" y="7" width="1.300" height="1.400" fill="#111"/><rect x="700" y="5" width="1" height="5" fill="#111"/><rect x="708" y="7" width="1.300" height="1.400" fill="#111"/><rect x="727" y="7" width="1.300" height="1.400" fill="#111"/><rect x="738" y="5" width="1" height="5" fill="#111"/><rect x="746" y="7" width="1.300" height="1.400" fill="#111"/><text x="756.7" y="12.400" text-anchor="middle" textLength="11.8" lengthAdjust="spacingAndGlyphs">18</text><rect x="765" y="7" width="1.300" height="1.400" fill="#111"/><rect x="775" y="5" width="1" height="5" fill="#111"/><rect x="784" y="7" width="1.300" height="1.400" fill="#111"/></g></svg>
<svg style="left:120px;top:123px;" width="794" height="4" viewBox="0 0 794 4"><rect x="122" y="0" width="1" height="3" fill="#808080"/><rect x="170" y="0" width="1" height="3" fill="#808080"/><rect x="217" y="0" width="1" height="3" fill="#808080"/><rect x="264" y="0" width="1" height="3" fill="#808080"/><rect x="311" y="0" width="1" height="3" fill="#808080"/><rect x="359" y="0" width="1" height="3" fill="#808080"/><rect x="406" y="0" width="1" height="3" fill="#808080"/><rect x="453" y="0" width="1" height="3" fill="#808080"/><rect x="500" y="0" width="1" height="3" fill="#808080"/><rect x="548" y="0" width="1" height="3" fill="#808080"/><rect x="595" y="0" width="1" height="3" fill="#808080"/><rect x="642" y="0" width="1" height="3" fill="#808080"/><rect x="689" y="0" width="1" height="3" fill="#808080"/></svg>
<svg style="left:191px;top:106px;" width="11" height="23" viewBox="0 0 11 23"><path d="M1.500 1.500h8l-4 7.500z" fill="#fff" stroke="#000" stroke-width="1.100"/><path d="M1.500 16.500h8l-4-7.500z" fill="#fff" stroke="#000" stroke-width="1.100"/><rect x="1.500" y="16.500" width="8" height="5.500" fill="#fff" stroke="#000" stroke-width="1.100"/></svg>
<svg style="left:833px;top:106px;" width="12" height="18" viewBox="0 0 12 18"><path d="M6 1v10" stroke="#000" stroke-width="1.100"/><path d="M1.600 16.500h8.800l-4.400-6z" fill="#fff" stroke="#000" stroke-width="1.100"/></svg>
<div style="left:5px;top:147px;width:16px;height:794px;background:#fff;border-left:1px solid #666;border-right:1px solid #666;"></div>
<div style="left:5px;top:147px;width:16px;height:77px;background:#c0c0c0;border:1px solid #8a8a8a;border-bottom:1px solid #444;"></div>
<svg style="left:5px;top:147px;" width="16" height="794" viewBox="0 0 16 794"><g font-family="Liberation Sans,sans-serif" font-size="12" fill="#111"><rect x="7.200" y="9.0" width="1.500" height="1.300" fill="#111"/><rect x="5" y="19.0" width="6" height="1" fill="#111"/><rect x="7.200" y="28.0" width="1.500" height="1.300" fill="#111"/><text x="8.300" y="41.7" text-anchor="middle">1</text><rect x="7.200" y="47.0" width="1.500" height="1.300" fill="#111"/><rect x="5" y="56.0" width="6" height="1" fill="#111"/><rect x="7.200" y="66.0" width="1.500" height="1.300" fill="#111"/><rect x="7.200" y="85.0" width="1.500" height="1.300" fill="#111"/><rect x="5" y="94.0" width="6" height="1" fill="#111"/><rect x="7.200" y="104.0" width="1.500" height="1.300" fill="#111"/><text x="8.300" y="117.3" text-anchor="middle">1</text><rect x="7.200" y="123.0" width="1.500" height="1.300" fill="#111"/><rect x="5" y="132.0" width="6" height="1" fill="#111"/><rect x="7.200" y="141.0" width="1.500" height="1.300" fill="#111"/><text x="8.300" y="155.1" text-anchor="middle">2</text><rect x="7.200" y="160.0" width="1.500" height="1.300" fill="#111"/><rect x="5" y="170.0" width="6" height="1" fill="#111"/><rect x="7.200" y="179.0" width="1.500" height="1.300" fill="#111"/><text x="8.300" y="192.9" text-anchor="middle">3</text><rect x="7.200" y="198.0" width="1.500" height="1.300" fill="#111"/><rect x="5" y="208.0" width="6" height="1" fill="#111"/><rect x="7.200" y="217.0" width="1.500" height="1.300" fill="#111"/><text x="8.300" y="230.7" text-anchor="middle">4</text><rect x="7.200" y="236.0" width="1.500" height="1.300" fill="#111"/><rect x="5" y="245.0" width="6" height="1" fill="#111"/><rect x="7.200" y="255.0" width="1.500" height="1.300" fill="#111"/><text x="8.300" y="268.5" text-anchor="middle">5</text><rect x="7.200" y="274.0" width="1.500" height="1.300" fill="#111"/><rect x="5" y="283.0" width="6" height="1" fill="#111"/><rect x="7.200" y="293.0" width="1.500" height="1.300" fill="#111"/><text x="8.300" y="306.3" text-anchor="middle">6</text><rect x="7.200" y="312.0" width="1.500" height="1.300" fill="#111"/><rect x="5" y="321.0" width="6" height="1" fill="#111"/><rect x="7.200" y="330.0" width="1.500" height="1.300" fill="#111"/><text x="8.300" y="344.1" text-anchor="middle">7</text><rect x="7.200" y="349.0" width="1.500" height="1.300" fill="#111"/><rect x="5" y="359.0" width="6" height="1" fill="#111"/><rect x="7.200" y="368.0" width="1.500" height="1.300" fill="#111"/><text x="8.300" y="381.9" text-anchor="middle">8</text><rect x="7.200" y="387.0" width="1.500" height="1.300" fill="#111"/><rect x="5" y="397.0" width="6" height="1" fill="#111"/><rect x="7.200" y="406.0" width="1.500" height="1.300" fill="#111"/><text x="8.300" y="419.7" text-anchor="middle">9</text><rect x="7.200" y="425.0" width="1.500" height="1.300" fill="#111"/><rect x="5" y="434.0" width="6" height="1" fill="#111"/><rect x="7.200" y="444.0" width="1.500" height="1.300" fill="#111"/><text x="8.300" y="457.4" text-anchor="middle" textLength="11.6" lengthAdjust="spacingAndGlyphs">10</text><rect x="7.200" y="463.0" width="1.500" height="1.300" fill="#111"/><rect x="5" y="472.0" width="6" height="1" fill="#111"/><rect x="7.200" y="482.0" width="1.500" height="1.300" fill="#111"/><text x="8.300" y="495.2" text-anchor="middle" textLength="11.6" lengthAdjust="spacingAndGlyphs">11</text><rect x="7.200" y="500.0" width="1.500" height="1.300" fill="#111"/><rect x="5" y="510.0" width="6" height="1" fill="#111"/><rect x="7.200" y="519.0" width="1.500" height="1.300" fill="#111"/><text x="8.300" y="533.0" text-anchor="middle" textLength="11.6" lengthAdjust="spacingAndGlyphs">12</text><rect x="7.200" y="538.0" width="1.500" height="1.300" fill="#111"/><rect x="5" y="548.0" width="6" height="1" fill="#111"/><rect x="7.200" y="557.0" width="1.500" height="1.300" fill="#111"/><text x="8.300" y="570.8" text-anchor="middle" textLength="11.6" lengthAdjust="spacingAndGlyphs">13</text><rect x="7.200" y="576.0" width="1.500" height="1.300" fill="#111"/><rect x="5" y="586.0" width="6" height="1" fill="#111"/><rect x="7.200" y="595.0" width="1.500" height="1.300" fill="#111"/><text x="8.300" y="608.6" text-anchor="middle" textLength="11.6" lengthAdjust="spacingAndGlyphs">14</text><rect x="7.200" y="614.0" width="1.500" height="1.300" fill="#111"/><rect x="5" y="623.0" width="6" height="1" fill="#111"/><rect x="7.200" y="633.0" width="1.500" height="1.300" fill="#111"/><text x="8.300" y="646.4" text-anchor="middle" textLength="11.6" lengthAdjust="spacingAndGlyphs">15</text><rect x="7.200" y="652.0" width="1.500" height="1.300" fill="#111"/><rect x="5" y="661.0" width="6" height="1" fill="#111"/><rect x="7.200" y="671.0" width="1.500" height="1.300" fill="#111"/><text x="8.300" y="684.2" text-anchor="middle" textLength="11.6" lengthAdjust="spacingAndGlyphs">16</text><rect x="7.200" y="689.0" width="1.500" height="1.300" fill="#111"/><rect x="5" y="699.0" width="6" height="1" fill="#111"/><rect x="7.200" y="708.0" width="1.500" height="1.300" fill="#111"/><text x="8.300" y="722.0" text-anchor="middle" textLength="11.6" lengthAdjust="spacingAndGlyphs">17</text><rect x="7.200" y="727.0" width="1.500" height="1.300" fill="#111"/><rect x="5" y="737.0" width="6" height="1" fill="#111"/><rect x="7.200" y="746.0" width="1.500" height="1.300" fill="#111"/><text x="8.300" y="759.8" text-anchor="middle" textLength="11.6" lengthAdjust="spacingAndGlyphs">18</text><rect x="7.200" y="765.0" width="1.500" height="1.300" fill="#111"/><rect x="5" y="775.0" width="6" height="1" fill="#111"/><rect x="7.200" y="784.0" width="1.500" height="1.300" fill="#111"/><text x="8.300" y="797.6" text-anchor="middle" textLength="11.6" lengthAdjust="spacingAndGlyphs">19</text></g></svg>
<div style="left:116px;top:148px;width:5px;height:793px;background:linear-gradient(to right,#e4e4e4,#c9c9c9);"></div>
<div style="left:915px;top:148px;width:5px;height:793px;background:linear-gradient(to left,#e4e4e4,#c9c9c9);"></div>
<div style="left:121px;top:143px;width:794px;height:5px;background:linear-gradient(to bottom,#e4e4e4,#d3d3d3);"></div>
<div style="left:116px;top:143px;width:5px;height:5px;background:radial-gradient(circle at 100% 100%,#d3d3d3,#e4e4e4 70%);"></div>
<div style="left:915px;top:143px;width:5px;height:5px;background:radial-gradient(circle at 0% 100%,#d3d3d3,#e4e4e4 70%);"></div>
<div style="left:121px;top:148px;width:794px;height:793px;background:#fff;border:1px solid #787878;border-bottom:none;"></div>
<div style="left:196px;top:149px;width:1px;height:792px;background:repeating-linear-gradient(to bottom,#a2a2a2 0 1px,transparent 1px 2px);"></div>
<div style="left:839px;top:149px;width:1px;height:792px;background:repeating-linear-gradient(to bottom,#a2a2a2 0 1px,transparent 1px 2px);"></div>
<div style="left:122px;top:223px;width:792px;height:1px;background:repeating-linear-gradient(to right,#a2a2a2 0 1px,transparent 1px 2px);"></div>
<div style="left:196px;top:224px;width:2px;height:15px;background:#000;"></div>
<svg style="left:197px;top:225px;" width="8" height="14" viewBox="0 0 8 14"><rect x="2.500" y="4" width="3.500" height="10" fill="#c0c4d0"/><rect x="1" y="2" width="5.300" height="1.200" fill="#111"/><rect x="1" y="2" width="2" height="5" fill="#111"/></svg>
<div style="left:1009px;top:101px;width:15px;height:840px;background:#f0f0f0;"></div>
<div style="left:1009px;top:114px;width:15px;height:528px;background:#c9c9c9;"></div>
<svg style="left:1011px;top:103px;" width="11" height="8" viewBox="0 0 11 8"><path d="M1.500 6.500l4-4 4 4" fill="none" stroke="#444" stroke-width="1.800"/></svg>
<svg style="left:1011px;top:885px;" width="11" height="8" viewBox="0 0 11 8"><path d="M1.800 1.500l3.500 3.600 3.500-3.600" fill="none" stroke="#444" stroke-width="1.800"/></svg>
<div style="left:1009px;top:897px;width:15px;height:1px;background:#e0e0e0;"></div>
<div style="left:1009px;top:911px;width:15px;height:1px;background:#e0e0e0;"></div>
<div style="left:1009px;top:926px;width:15px;height:1px;background:#e0e0e0;"></div>
<div style="left:1009px;top:897px;width:1px;height:44px;background:#e6e6e6;"></div>
<div style="left:1023px;top:897px;width:1px;height:44px;background:#e6e6e6;"></div>
<svg style="left:1011px;top:899px;" width="11" height="9" viewBox="0 0 11 9"><path d="M1.500 4l3-3 3 3zM1.500 7.500l3-3 3 3z" fill="#000"/><path d="M1.500 4h6" stroke="#000" stroke-width="0.800"/></svg>
<svg style="left:1011px;top:913px;" width="11" height="9" viewBox="0 0 11 9"><circle cx="4.600" cy="4.200" r="2.500" fill="#d4145a"/></svg>
<svg style="left:1011px;top:929px;" width="11" height="9" viewBox="0 0 11 9"><path d="M1.500 1l3 3 3-3zM1.500 4.500l3 3 3-3z" fill="#000"/><path d="M1.500 4.500h6" stroke="#000" stroke-width="0.800"/></svg>
<div style="left:0px;top:941px;width:1024px;height:15px;background:#f0f0f0;"></div>
<div style="left:0px;top:941px;width:15px;height:14px;background:#dadada;"></div>
<div style="left:995px;top:941px;width:14px;height:14px;background:#dadada;"></div>
<svg style="left:3px;top:943px;" width="8" height="10" viewBox="0 0 8 10"><path d="M6 1l-4 4 4 4" fill="none" stroke="#b0b0b0" stroke-width="1.800"/></svg>
<svg style="left:998px;top:943px;" width="8" height="10" viewBox="0 0 8 10"><path d="M2 1l4 4-4 4" fill="none" stroke="#b0b0b0" stroke-width="1.800"/></svg>
<div style="left:1024px;top:101px;width:6px;height:855px;background:#f0f0f0;"></div>
<div style="left:1025px;top:508px;width:5px;height:40px;background:#fff;border:1px solid #8a8a8a;border-radius:3px;"></div>
<div style="left:1030px;top:101px;width:238px;height:855px;background:#f0f0f0;"></div>
<div style="left:1268px;top:101px;width:7px;height:855px;background:#bcd1ec;"></div>
<div style="left:1275px;top:101px;width:1px;height:855px;background:#0a0a0a;"></div>
<div style="left:1276px;top:101px;width:4px;height:855px;background:#ebebeb;"></div>
<div style="left:1034px;top:104px;width:24px;height:24px;border:1px solid #5a9ad8;background:#f4f9fe;"></div>
<svg style="left:1037px;top:107px;" width="18" height="18" viewBox="0 0 18 18"><circle cx="8.400" cy="8.400" r="8" fill="#fdfdfd" stroke="#b08878" stroke-width="0.900"/><path d="M8.400 1.500l2.200 7.300h-4.400z" fill="#e03038"/><path d="M8.400 15.300l2.200-6.500h-4.400z" fill="#a4b4c8"/></svg>
<svg style="left:1062px;top:107px;" width="20" height="19" viewBox="0 0 20 19"><path d="M8 7.500c0-1.500 1-2.500 3-2.500h6.500v2h-1.500v9.500h-2v-9.500h-1.200v9.500h-2v-6c-1.800 0-2.800-1-2.800-3z" fill="#c6cace" stroke="#5c6068" stroke-width="1"/>
<path d="M0.800 4.500c0-2.300 1.500-3.300 3.700-3.300h8.700v2.300h-1.900v9.700h-2.400v-9.700h-1.500v9.700h-2.400v-5.700c-2.600 0-4.200-0.900-4.200-3z" fill="#f4f7fc" stroke="#1c2c5c" stroke-width="1.100"/></svg>
<svg style="left:1086px;top:106px;" width="22" height="21" viewBox="0 0 22 21"><path d="M5.500 17.500l8-12h2.500l1 12h-3l-0.200-2.500h-3.500l-1.500 2.500z" fill="#c4c8cc" opacity=".9"/>
<path d="M1.500 14.500l9.500-13.200h2.600l1 13.200h-3.200l-0.200-3h-4l-1.900 3zM8.600 9.200h2.500l-0.300-4z" fill="#dfe6fa" stroke="#4058b0" stroke-width="1" fill-rule="evenodd"/>
<path d="M13.800 8l2.600-1.800h1.400v10.300h1.400v1.700h-5.600v-1.700h1.700v-6.300l-1.500 0.800z" fill="#d4d6da" stroke="#5a5e6a" stroke-width="0.900"/></svg>
<svg style="left:1254px;top:114px;" width="9" height="5" viewBox="0 0 9 5"><path d="M0.500 0.300h8l-4 4.400z" fill="#000"/></svg>
<div style="left:1034px;top:136px;width:230px;height:1px;background:#dcdcdc;"></div>
<div style="left:1034px;top:137px;width:230px;height:1px;background:#f8f8f8;"></div>
<span class="t" id="t15" style="left:1035px;top:148px;font-size:12px;color:#000;transform:scaleX(1.0252);transform-origin:0 0;">Dokumentinhalt:</span>
<div style="left:1034px;top:167px;width:231px;height:24px;background:#fff;border:1px solid #abb3c4;"></div>
<span class="t" id="t16" style="left:1041px;top:174px;font-size:12px;color:#000;transform:scaleX(1.0004);transform-origin:0 0;">Überschriften</span>
<svg style="left:1251px;top:177px;" width="9" height="7" viewBox="0 0 9 7"><path d="M1.300 1.100l3.200 3.500 3.200-3.500" fill="none" stroke="#3a3a3a" stroke-width="2"/></svg>
<div style="left:1034px;top:197px;width:231px;height:674px;background:#fff;border:1px solid #d4d4d4;"></div>
<div style="left:1040px;top:203px;width:13px;height:13px;background:#fff;border:1px solid #8c8c8c;"></div>
<div style="left:1054px;top:201px;width:207px;height:18px;background:#95b3d5;"></div>
<span class="t" id="t17" style="left:1058px;top:205px;font-size:12px;color:#fff;transform:scaleX(0.9806);transform-origin:0 0;">Unbenannt 1</span>
<div style="left:1034px;top:877px;width:25px;height:25px;background:#eeeeee;border:1px solid #bdbdbd;"></div>
<svg style="left:1034px;top:877px;" width="25" height="25" viewBox="0 0 25 25"><g fill="#d8d8d8" stroke="#a8a8a8" stroke-width="1"><rect x="6.500" y="6.500" width="2.500" height="11"/><path d="M18.500 6.500v11l-7-5.500z"/></g></svg>
<div style="left:1065px;top:877px;width:25px;height:25px;background:#eeeeee;border:1px solid #bdbdbd;"></div>
<svg style="left:1065px;top:877px;" width="25" height="25" viewBox="0 0 25 25"><g fill="#d8d8d8" stroke="#a8a8a8" stroke-width="1"><path d="M15.500 6.500v11l-7-5.500z"/></g></svg>
<div style="left:1096px;top:877px;width:25px;height:25px;background:#eeeeee;border:1px solid #bdbdbd;"></div>
<svg style="left:1096px;top:877px;" width="25" height="25" viewBox="0 0 25 25"><g fill="#d8d8d8" stroke="#a8a8a8" stroke-width="1"><path d="M9.500 6.500v11l7-5.500z"/></g></svg>
<div style="left:1127px;top:877px;width:25px;height:25px;background:#eeeeee;border:1px solid #bdbdbd;"></div>
<svg style="left:1127px;top:877px;" width="25" height="25" viewBox="0 0 25 25"><g fill="#d8d8d8" stroke="#a8a8a8" stroke-width="1"><rect x="16" y="6.500" width="2.500" height="11"/><path d="M6.500 6.500v11l7-5.500z"/></g></svg>
<span class="t" id="t18" style="left:1035px;top:910px;font-size:12px;color:#000;transform:scaleX(0.9653);transform-origin:0 0;">Gliederungsebene:</span>
<div style="left:1034px;top:926px;width:231px;height:24px;background:#fff;border:1px solid #abb3c4;"></div>
<span class="t" id="t19" style="left:1041px;top:933px;font-size:12px;color:#000;transform:scaleX(0.9663);transform-origin:0 0;">Gliederungsebenen 1 bis 9 anzeigen</span>
<svg style="left:1251px;top:936px;" width="9" height="7" viewBox="0 0 9 7"><path d="M1.300 1.100l3.200 3.500 3.200-3.500" fill="none" stroke="#3a3a3a" stroke-width="2"/></svg>
<div style="left:0px;top:956px;width:1280px;height:28px;background:#f0f0f0;"></div>
<div style="left:0px;top:955px;width:1280px;height:1px;background:#e0e0e0;"></div>
<div style="left:7px;top:961px;width:273px;height:18px;background:#fff;border:1px solid #dcdcdc;"></div>
<div style="left:288px;top:961px;width:111px;height:18px;background:#fff;border:1px solid #dcdcdc;"></div>
<span class="t" id="t20" style="left:292px;top:964px;font-size:12px;color:#000;transform:scaleX(0.8822);transform-origin:0 0;">Ze 1 Sp 1</span>
<div style="left:406px;top:961px;width:82px;height:18px;background:#fff;border:1px solid #dcdcdc;"></div>
<span class="t" id="t21" style="left:410px;top:964px;font-size:12px;color:#000;transform:scaleX(0.9447);transform-origin:0 0;">Bereich 1</span>
<div style="left:495px;top:961px;width:76px;height:18px;background:#fff;border:1px solid #dcdcdc;"></div>
<span class="t" id="t22" style="left:499px;top:964px;font-size:12px;color:#000;transform:scaleX(0.9614);transform-origin:0 0;">Kapitel 1</span>
<div style="left:578px;top:961px;width:128px;height:18px;background:#fff;border:1px solid #dcdcdc;"></div>
<span class="t" id="t23" style="left:582px;top:964px;font-size:12px;color:#000;transform:scaleX(0.9406);transform-origin:0 0;">Seite 1 von 1</span>
<div style="left:713px;top:961px;width:118px;height:18px;background:#fff;border:1px solid #dcdcdc;"></div>
<span class="t" id="t24" style="left:717px;top:964px;font-size:12px;color:#000;transform:scaleX(0.9516);transform-origin:0 0;">Deutsch</span>
<div style="left:838px;top:961px;width:69px;height:18px;background:#fff;border:1px solid #dcdcdc;"></div>
<div style="left:915px;top:961px;width:47px;height:18px;background:#fff;border:1px solid #dcdcdc;"></div>
<span class="t" id="t25" style="left:927px;top:964px;font-size:12px;color:#000;transform:scaleX(0.8741);transform-origin:0 0;">EINF</span>
<div style="left:963px;top:958px;width:24px;height:24px;border:1px solid #5a9ad8;background:#f4f9fe;"></div>
<svg style="left:966px;top:961px;" width="18" height="18" viewBox="0 0 18 18"><rect x="1.500" y="1.500" width="15" height="15" fill="#fff" stroke="#4a5a80" stroke-width="1"/><path d="M4 4.500h10M4 6.500h10M4 8.500h10M4 10.500h10M4 12.500h10M4 14.500h10" stroke="#4a5470" stroke-width="0.900"/></svg>
<svg style="left:992px;top:963px;" width="14" height="14" viewBox="0 0 14 14"><path d="M1 1.500h12M1 3.500h12M1 5.500h12M1 7.500h12M1 9.500h12M1 11.500h12" stroke="#5a6478" stroke-width="0.900"/></svg>
<svg style="left:1015px;top:961px;" width="17" height="18" viewBox="0 0 17 18"><rect x="0.500" y="1.500" width="15" height="14" fill="#fff" stroke="#4a5a80" stroke-width="1"/><path d="M3 4.500h10M3 12.500h10" stroke="#5a6480" stroke-width="1"/></svg>
<svg style="left:1039px;top:963px;" width="15" height="14" viewBox="0 0 15 14"><path d="M3.500 1.500h9M5.500 3.500h8M3.500 5.500h10M5.500 7.500h8M3.500 9.500h9M5.500 11.500h8" stroke="#5a6478" stroke-width="0.900"/><path d="M1 1.500h1.300M1 5.500h1.300M1 9.500h1.300" stroke="#5a6478" stroke-width="1"/></svg>
<div style="left:1082px;top:969px;width:118px;height:1px;background:#dedede;"></div>
<svg style="left:1066px;top:960px;" width="18" height="18" viewBox="0 0 18 18"><circle cx="9" cy="9" r="7" fill="#fdfdfe" stroke="#c0ccdc" stroke-width="1.700"/><path d="M6 9h5.500" stroke="#4a0c14" stroke-width="1.200"/></svg>
<svg style="left:1196px;top:960px;" width="18" height="18" viewBox="0 0 18 18"><circle cx="9" cy="9" r="7" fill="#fdfdfe" stroke="#c0ccdc" stroke-width="1.700"/><path d="M6 9h6M9 6v6" stroke="#4a0c14" stroke-width="1.100"/></svg>
<svg style="left:1133px;top:964px;" width="11" height="11" viewBox="0 0 11 11"><circle cx="5.500" cy="5.500" r="3.400" fill="#f2c63c" stroke="#e8b83a" stroke-width="0.800"/></svg>
<span class="t" id="t26" style="left:1228.5px;top:964px;font-size:12px;color:#000;transform:scaleX(0.9185);transform-origin:0 0;">100%</span>
<div style="left:0px;top:984px;width:1280px;height:2px;background:#000;"></div>
<div style="left:48px;top:984px;width:344px;height:2px;background:#2b2b2b;"></div>
<div style="left:643px;top:984px;width:35px;height:2px;background:#2f5f2f;"></div>
<div style="left:687px;top:984px;width:48px;height:2px;background:#2b2b2b;"></div>
</div></body></html>
